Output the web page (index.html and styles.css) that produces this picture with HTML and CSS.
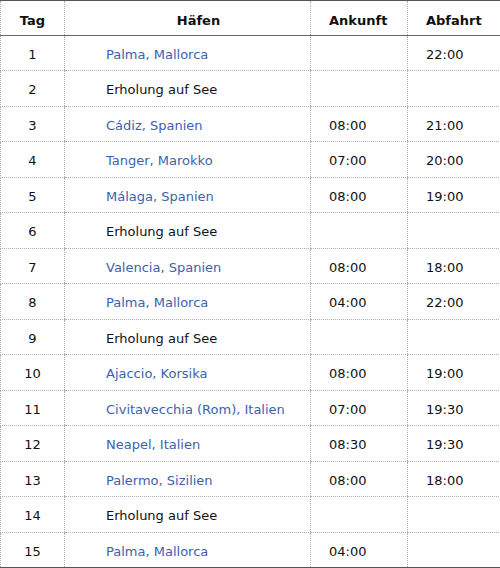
FILE: index.html
```html
<!DOCTYPE html>
<html lang="de">
<head>
<meta charset="utf-8">
<title>Route</title>
<link rel="stylesheet" href="styles.css">
</head>
<body>
<table class="route">
  <colgroup>
    <col class="w-day">
    <col class="w-port">
    <col class="w-arr">
    <col class="w-dep">
  </colgroup>
  <thead>
    <tr>
      <th class="c-day">Tag</th>
      <th class="c-port">Häfen</th>
      <th class="c-time">Ankunft</th>
      <th class="c-time c-last">Abfahrt</th>
    </tr>
  </thead>
  <tbody>
    <tr><td class="c-day">1</td><td class="c-port"><span class="link">Palma, Mallorca</span></td><td class="c-time"></td><td class="c-time c-last">22:00</td></tr>
    <tr><td class="c-day">2</td><td class="c-port">Erholung auf See</td><td class="c-time"></td><td class="c-time c-last"></td></tr>
    <tr><td class="c-day">3</td><td class="c-port"><span class="link">Cádiz, Spanien</span></td><td class="c-time">08:00</td><td class="c-time c-last">21:00</td></tr>
    <tr><td class="c-day">4</td><td class="c-port"><span class="link">Tanger, Marokko</span></td><td class="c-time">07:00</td><td class="c-time c-last">20:00</td></tr>
    <tr><td class="c-day">5</td><td class="c-port"><span class="link">Málaga, Spanien</span></td><td class="c-time">08:00</td><td class="c-time c-last">19:00</td></tr>
    <tr><td class="c-day">6</td><td class="c-port">Erholung auf See</td><td class="c-time"></td><td class="c-time c-last"></td></tr>
    <tr><td class="c-day">7</td><td class="c-port"><span class="link">Valencia, Spanien</span></td><td class="c-time">08:00</td><td class="c-time c-last">18:00</td></tr>
    <tr><td class="c-day">8</td><td class="c-port"><span class="link">Palma, Mallorca</span></td><td class="c-time">04:00</td><td class="c-time c-last">22:00</td></tr>
    <tr><td class="c-day">9</td><td class="c-port">Erholung auf See</td><td class="c-time"></td><td class="c-time c-last"></td></tr>
    <tr><td class="c-day">10</td><td class="c-port"><span class="link">Ajaccio, Korsika</span></td><td class="c-time">08:00</td><td class="c-time c-last">19:00</td></tr>
    <tr><td class="c-day">11</td><td class="c-port"><span class="link">Civitavecchia (Rom), Italien</span></td><td class="c-time">07:00</td><td class="c-time c-last">19:30</td></tr>
    <tr><td class="c-day">12</td><td class="c-port"><span class="link">Neapel, Italien</span></td><td class="c-time">08:30</td><td class="c-time c-last">19:30</td></tr>
    <tr><td class="c-day">13</td><td class="c-port"><span class="link">Palermo, Sizilien</span></td><td class="c-time">08:00</td><td class="c-time c-last">18:00</td></tr>
    <tr><td class="c-day">14</td><td class="c-port">Erholung auf See</td><td class="c-time"></td><td class="c-time c-last"></td></tr>
    <tr><td class="c-day">15</td><td class="c-port"><span class="link">Palma, Mallorca</span></td><td class="c-time">04:00</td><td class="c-time c-last"></td></tr>
  </tbody>
</table>
</body>
</html>
```

FILE: styles.css
```css
html, body {
  margin: 0;
  padding: 0;
  background: #fff;
}

body {
  font-family: "DejaVu Sans", Verdana, sans-serif;
  font-size: 13px;
  color: #111;
}

.route {
  width: 500px;
  border-collapse: collapse;
  table-layout: fixed;
  border-top: 1px solid #555;
  border-bottom: 1px solid #555;
}

.w-day { width: 64px; }
.w-port { width: 246px; }
.w-arr { width: 97px; }
.w-dep { width: 93px; }

.route th,
.route td {
  height: 14.5px;
  line-height: 14.5px;
  padding: 12px 0 8px;
  border-left: 1px dotted #b0b0b0;
  border-bottom: 1px dotted #b0b0b0;
  vertical-align: middle;
  white-space: nowrap;
}

.route th {
  font-weight: bold;
  padding-top: 13px;
  padding-bottom: 6px;
  border-bottom: 1px solid #666;
}

.route tbody tr:last-child td {
  border-bottom: 1px solid #555;
}

.route .c-last {
  border-right: 1px dotted #b0b0b0;
}

.route .c-day {
  text-align: center;
}

.route .c-port {
  text-align: left;
  padding-left: 41px;
}

.route th.c-port {
  text-align: center;
  padding-left: 22px;
}

.route .c-time {
  text-align: left;
  padding-left: 18px;
}

.link {
  color: #3d62ad;
}
```
